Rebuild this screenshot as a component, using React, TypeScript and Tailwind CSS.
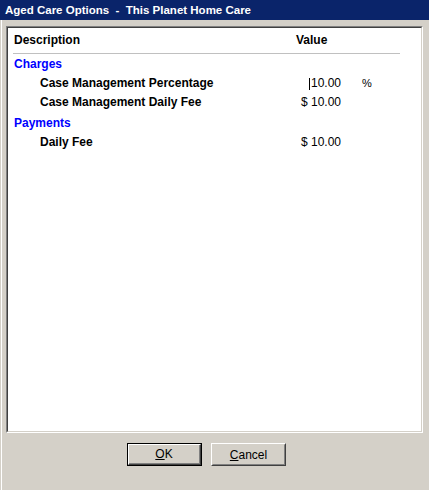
const rows = [
    {kind: "section", label: "Charges"},
    {kind: "item", label: "Case Management Percentage", value: "10.00", unit: "%", caret: true},
    {kind: "item", label: "Case Management Daily Fee", value: "$ 10.00"},
    {kind: "section", label: "Payments"},
    {kind: "item", label: "Daily Fee", value: "$ 10.00"},
]

interface IRow {
    kind: string,
    label: string,
    value?: string,
    unit?: string,
    caret?: boolean
}

function Row({row, first}: { row: IRow, first: boolean }) {
    if (row.kind === "section") {
        return (
            <div className={`h-[19px] leading-[19px] pl-[6px] font-bold text-[#0000ff] ${first ? "" : "mt-[2px]"}`}>
                {row.label}
            </div>
        )
    }
    return (
        <div className="h-[19px] leading-[19px] flex items-center">
            <div className="w-[290px] shrink-0 pl-[32px] font-bold text-black">{row.label}</div>
            <div className="w-[43px] shrink-0 flex justify-end items-center font-normal text-black whitespace-pre">
                {row.caret && <span className="inline-block shrink-0 w-px h-[12px] bg-black mr-[1px]"/>}
                <span className="text-[12px]">{row.value}</span>
            </div>
            <div className="pl-[21px] text-[11px] text-black">{row.unit}</div>
        </div>
    )
}

function Button({label, isDefault}: { label: string, isDefault?: boolean }) {
    const first = label.charAt(0)
    const rest = label.slice(1)
    if (isDefault) {
        return (
            <div className="w-[75px] h-[23px] border border-black">
                <div className="w-full h-full border border-t-white border-l-white border-b-[#404040] border-r-[#404040]">
                    <div
                        className="w-full h-full border-b border-r border-b-[#808080] border-r-[#808080] flex items-center justify-center text-[12px] text-black">
                        <span><span className="underline">{first}</span>{rest}</span>
                    </div>
                </div>
            </div>
        )
    }
    return (
        <div className="w-[75px] h-[23px] border border-t-white border-l-white border-b-[#404040] border-r-[#404040]">
            <div
                className="w-full h-full border border-t-[#d4d0c8] border-l-[#d4d0c8] border-b-[#808080] border-r-[#808080] flex items-center justify-center text-[12px] text-black">
                <span><span className="underline">{first}</span>{rest}</span>
            </div>
        </div>
    )
}

export default function App() {
    return (
        <div className="w-[429px] h-[490px] bg-[#d4d0c8] flex flex-col overflow-hidden font-['Liberation_Sans',Arial,sans-serif]">
            <div className="h-[20px] bg-[#0a246a] text-white font-bold text-[11.5px] leading-[21px] pl-[5px] whitespace-pre">
                Aged Care Options  -  This Planet Home Care
            </div>
            <div className="flex-1 ml-[1px] border-l border-white flex flex-col">
                <div
                    className="mt-[6px] ml-[4px] w-[417px] h-[407px] border border-t-[#808080] border-l-[#808080] border-b-white border-r-white">
                    <div
                        className="w-full h-full border border-t-[#404040] border-l-[#404040] border-b-[#d4d0c8] border-r-[#d4d0c8] bg-white text-[12px]">
                        <div className="h-[25px] pt-[6px] leading-[13px] flex font-bold text-black">
                            <div className="w-[288px] pl-[6px]">Description</div>
                            <div>Value</div>
                        </div>
                        <div className="ml-[5px] w-[387px] h-px bg-[#c0c0c0]"/>
                        <div className="mt-px flex flex-col">
                            {rows.map((r, i) => <Row key={i} row={r} first={i === 0}/>)}
                        </div>
                    </div>
                </div>
                <div className="mt-[10px] pl-[125px] flex gap-[9px]">
                    <Button label="OK" isDefault/>
                    <Button label="Cancel"/>
                </div>
            </div>
        </div>
    )
}
